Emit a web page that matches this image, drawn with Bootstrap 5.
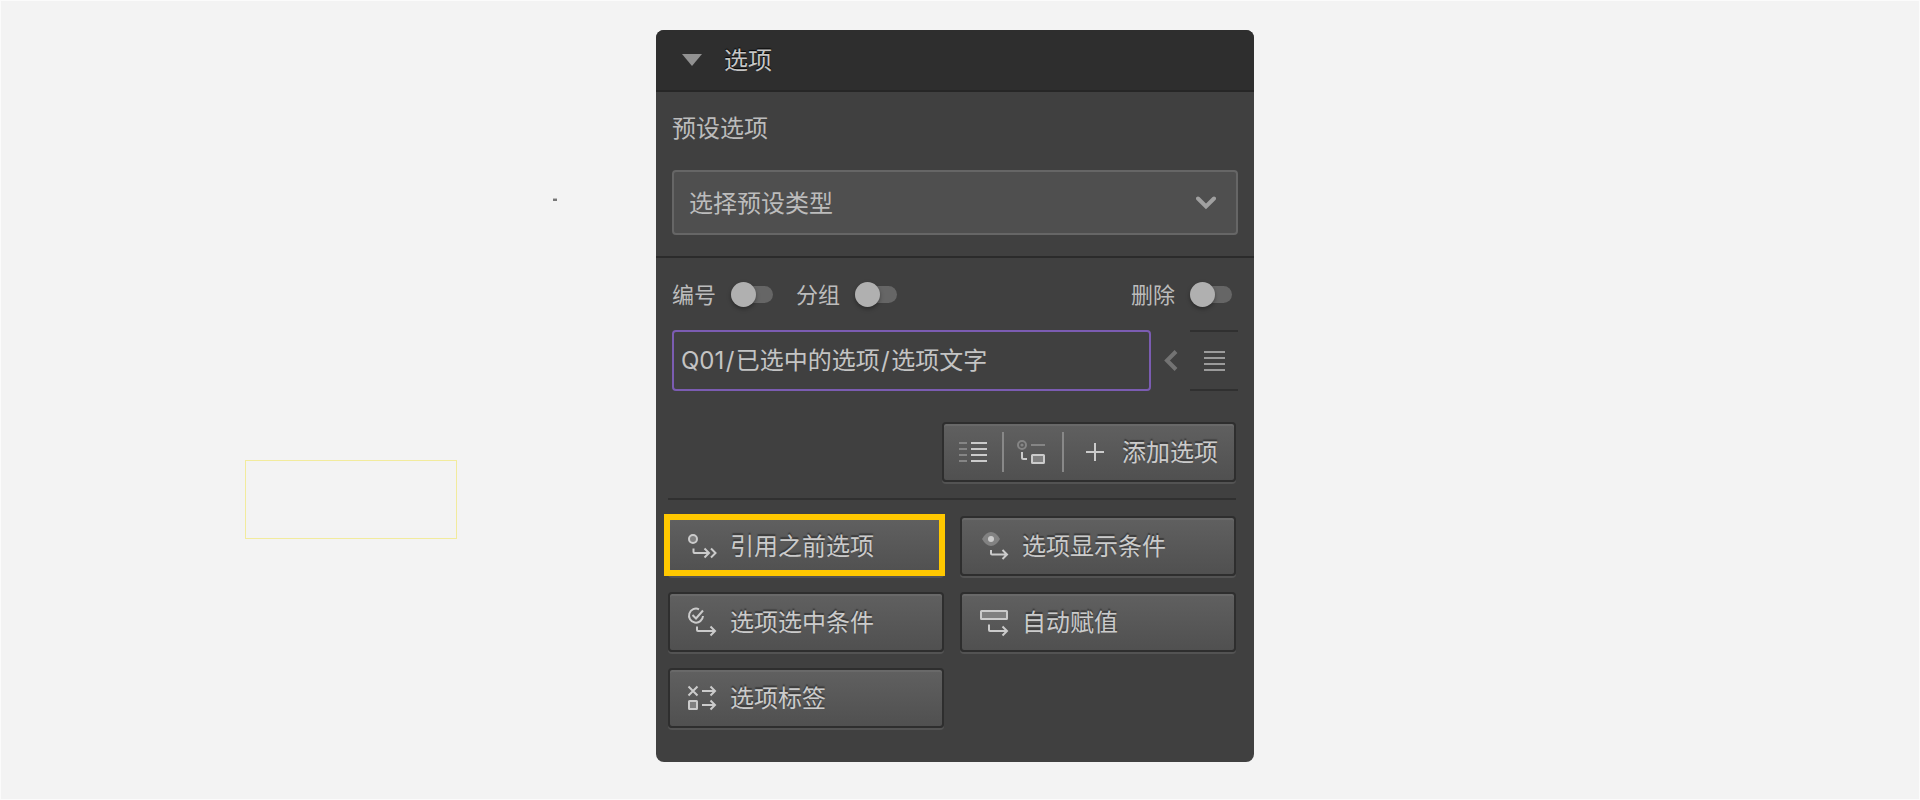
<!DOCTYPE html>
<html lang="zh-CN">
<head>
<meta charset="utf-8">
<meta name="viewport" content="width=device-width, initial-scale=1">
<title>选项</title>
<link href="https://cdn.jsdelivr.net/npm/bootstrap@5.3.0/dist/css/bootstrap.min.css" rel="stylesheet">
<style>
body{height:800px;overflow:hidden;background:#f3f3f3;border:1px solid #fbfbfb;font:24px/36px "Noto Sans CJK SC",sans-serif;color:#bcbcbc}
svg{display:block;flex:none}
.txt{padding-bottom:2px}
.panel{width:598px;height:732px;margin:29px 0 0 655px;background:#404040;border-radius:8px;overflow:hidden}
.panel-head{height:62px;background:#2e2e2e;border-bottom:2px solid #262626;padding-left:26px;gap:22px;color:#c6c6c6;text-shadow:0 -1px 1px #000}
.preset{height:166px;padding:17px 16px 0;border-bottom:2px solid #2b2b2b}
.preset-box{height:65px;margin-top:25px;padding:0 20px 0 15px;background:#4f4f4f;border:2px solid #666;border-radius:4px}
.toggles{height:72px;padding:0 22px 0 16px;font-size:22px}
.tgl{width:42px;height:17px;margin-left:15px;border-radius:9px;background:#666}
.tgl::before{content:"";display:block;width:25px;height:25px;margin-top:-4px;border-radius:50%;background:#b0b0b0;box-shadow:0 2px 4px rgba(0,0,0,.35)}
.grp{margin-left:23px}
.opt-row{height:61px;padding:0 16px}
.opt-input{width:479px;height:61px;border:2px solid #7b5cb2;border-radius:4px;padding-left:7px;color:#c4c4c4;font-family:Inter,"Noto Sans CJK SC",sans-serif}
.sl{padding:0 1.4px}
.drag{width:48px;height:61px;border:solid #303030;border-width:2px 0}
.tools{padding:31px 18px 0 12px}
.key{height:60px;border:2px solid #2e2e2e;border-radius:4px;background:linear-gradient(#606060,#505050);box-shadow:inset 0 2px #696969,0 2px #535353;color:#cbcbcb;text-shadow:0 -2px 1px #3a3a3a}
.add-group{width:294px}
.cell{width:60px;height:40px;border-right:2px solid #888}
.plus{margin:0 18px 0 22px}
.rule{height:2px;background:#303030;margin:16px 0}
.key-grid{display:grid;grid-template-columns:276px 276px;gap:16px}
.key-grid .key{padding:0 0 0 16px;gap:12px}
.picked::after{content:"";position:absolute;left:-6px;top:-4px;width:281px;height:62px;border:6px solid #ffc800}
.ghost{left:245px;top:460px;width:212px;height:79px;border:1px solid #f2eb9d}
.speck{left:553px;top:198px;width:4px;height:3px;background:#777;border-top:1px solid #bbb}
.ln{fill:none;stroke:#cbcbcb;stroke-width:2}
</style>
<script src="https://cdn.jsdelivr.net/npm/bootstrap@5.3.0/dist/js/bootstrap.bundle.min.js"></script>
</head>
<body>
<div class="ghost position-absolute"></div>
<div class="speck position-absolute"></div>
<main class="panel">
  <header class="panel-head d-flex align-items-center">
    <svg width="20" height="12"><path d="M0 0H20L10 12Z" fill="#919191"/></svg>
    <span class="txt">选项</span>
  </header>
  <section class="preset">
    <div>预设选项</div>
    <div class="preset-box d-flex align-items-center justify-content-between">
      <span class="txt">选择预设类型</span>
      <svg width="20" height="14"><path d="M2 2.5 10 10.5 18 2.5" fill="none" stroke="#a0a0a0" stroke-width="4" stroke-linecap="round"/></svg>
    </div>
  </section>
  <section class="toggles d-flex align-items-center">
    <span class="txt">编号</span><span class="tgl"></span>
    <span class="txt grp">分组</span><span class="tgl"></span>
    <span class="txt ms-auto">删除</span><span class="tgl"></span>
  </section>
  <section class="opt-row d-flex justify-content-between">
    <div class="opt-input d-flex align-items-center"><div>Q01<span class="sl">/</span>已选中的选项<span class="sl">/</span>选项文字</div></div>
    <svg width="14" height="61"><path d="M12 21.5 3 30.5 12 39.5" fill="none" stroke="#737373" stroke-width="4"/></svg>
    <div class="drag d-flex align-items-center justify-content-center">
      <svg width="21" height="20"><path d="M0 1H21M0 7H21M0 13H21M0 19H21" stroke="#9b9b9b" stroke-width="2"/></svg>
    </div>
  </section>
  <section class="tools">
    <div class="key add-group d-flex align-items-center ms-auto">
      <div class="cell d-flex align-items-center justify-content-center">
        <svg width="28" height="20"><path d="M0 1H8M0 7H8M0 13H8M0 19H8" stroke="#858585" stroke-width="2"/><path d="M12 1H28M12 7H28M12 13H28M12 19H28" stroke="#cbcbcb" stroke-width="2"/></svg>
      </div>
      <div class="cell d-flex align-items-center justify-content-center pe-1">
        <svg width="28" height="26"><g fill="none" stroke="#858585" stroke-width="2"><circle cx="5" cy="6" r="4"/><path d="M14 6H28"/></g><circle cx="5" cy="6" r="1.6" fill="#858585"/><path class="ln" d="M5 13V18.5Q5 20 6.500 20H10"/><rect x="15" y="16" width="12" height="8" rx=".5" fill="#808080" stroke="#cbcbcb" stroke-width="2"/></svg>
      </div>
      <svg width="18" height="18" class="plus"><path class="ln" d="M9 0V18M0 9H18"/></svg>
      <span class="txt">添加选项</span>
    </div>
    <div class="rule"></div>
    <div class="key-grid">
      <div class="key picked d-flex align-items-center position-relative">
        <svg width="32" height="32"><circle class="ln" cx="7" cy="9" r="4" style="fill:#808080"/><path class="ln" d="M7.500 18.500V22Q7.500 23 8.500 23H23M18.500 18.500 23 23 18.500 27.500M25 18.500 29.500 23 25 27.500"/></svg>
        <span class="txt">引用之前选项</span>
      </div>
      <div class="key d-flex align-items-center">
        <svg width="32" height="32"><path d="M4 9Q8 2 13 2T22 9Q18 16 13 16T4 9Z" fill="#828282"/><circle cx="13" cy="9" r="3" fill="#cbcbcb"/><path class="ln" d="M13 20V23.500Q13 24.500 14 24.500H29M24.500 20 29 24.500 24.500 29"/></svg>
        <span class="txt">选项显示条件</span>
      </div>
      <div class="key d-flex align-items-center">
        <svg width="32" height="32"><path class="ln" d="M13 3.300A7 7 0 1 0 17 10M6.500 9 10 12.500 17 4.500M11 20.500V24Q11 25 12 25H29M24.500 20.500 29 25 24.500 29.500"/></svg>
        <span class="txt">选项选中条件</span>
      </div>
      <div class="key d-flex align-items-center">
        <svg width="32" height="32"><rect x="3" y="5" width="26" height="8" rx=".5" fill="#808080" stroke="#cbcbcb" stroke-width="2"/><path class="ln" d="M11 18.500V24Q11 25 12 25H29M24.500 20.500 29 25 24.500 29.500"/></svg>
        <span class="txt">自动赋值</span>
      </div>
      <div class="key d-flex align-items-center">
        <svg width="32" height="32"><path class="ln" d="M2.500 4.500 11.500 13.500M11.500 4.500 2.500 13.500M16 9H29M24.500 4.500 29 9 24.500 13.500M16 23H29M24.500 18.500 29 23 24.500 27.500"/><rect x="3" y="19" width="8" height="8" rx=".5" fill="#808080" stroke="#cbcbcb" stroke-width="2"/></svg>
        <span class="txt">选项标签</span>
      </div>
    </div>
  </section>
</main>
</body>
</html>
